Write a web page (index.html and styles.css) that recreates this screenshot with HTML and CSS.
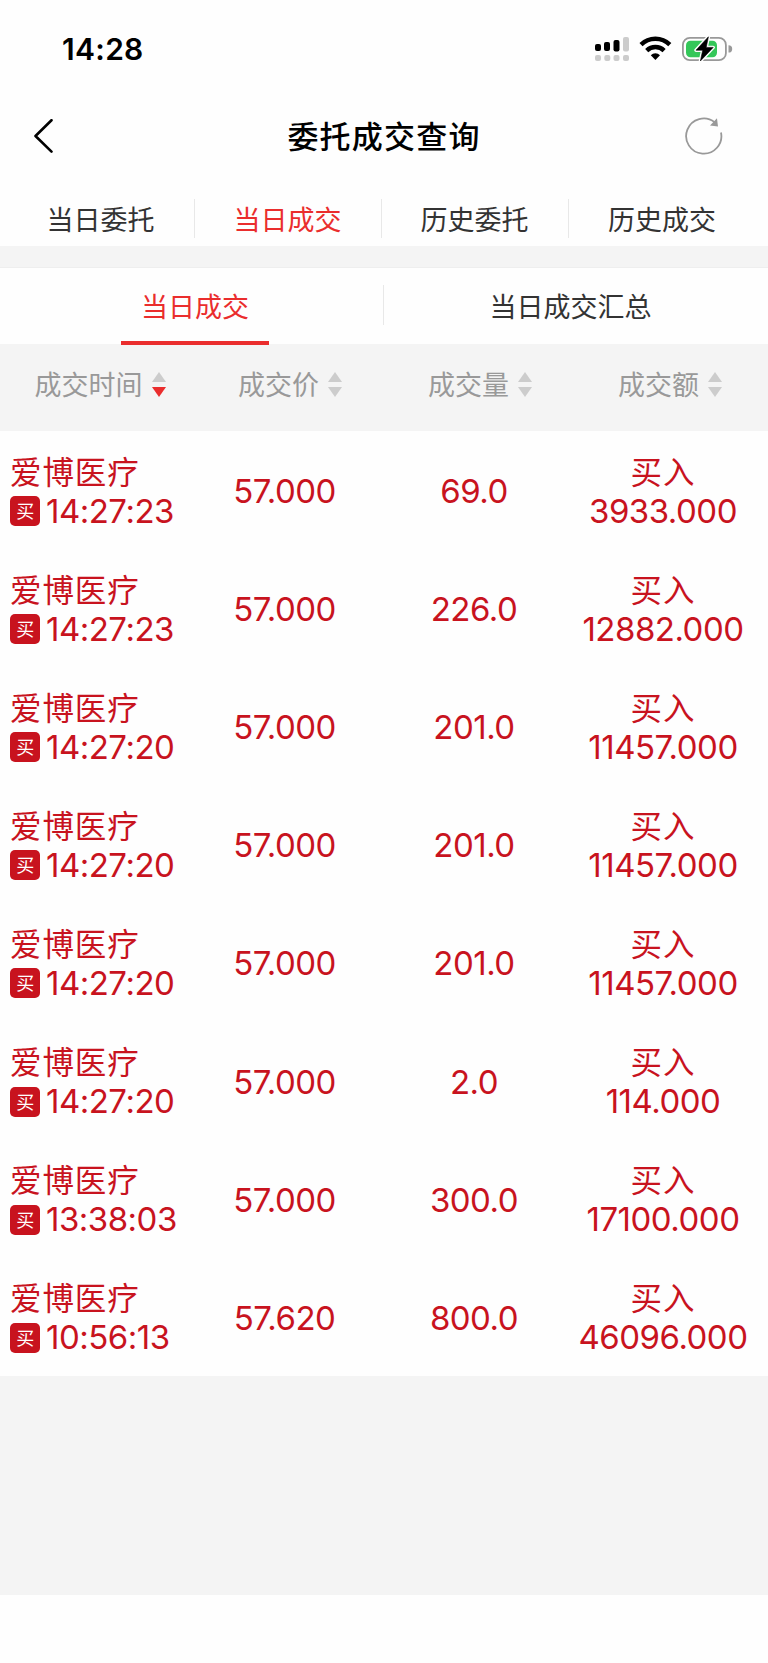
FILE: index.html
```
<!doctype html>
<html lang="zh-CN">
<head>
    <meta charset="utf-8" />
    <title>委托成交查询</title>
    <link rel="stylesheet" href="styles.css">
</head>
<body>
<div class="status">
    <span class="status__time">14:28</span>
    <svg class="status__icons" width="138" height="26" viewBox="0 0 138 26">
        <!-- 信号 -->
        <g fill="#000">
            <rect x="0" y="8" width="6" height="7" rx="2"/>
            <rect x="9" y="6" width="6" height="9" rx="2"/>
            <rect x="18.5" y="4" width="6" height="11.5" rx="2"/>
        </g>
        <g fill="#ccc">
            <rect x="28" y="1" width="6" height="14.5" rx="2"/>
            <rect x="0" y="19" width="6" height="6" rx="2"/>
            <rect x="9.3" y="19" width="6" height="6" rx="2"/>
            <rect x="18.5" y="19" width="6" height="6" rx="2"/>
            <rect x="28" y="19" width="6" height="6" rx="2"/>
        </g>
        <!-- wifi -->
        <g fill="none" stroke="#000" stroke-width="4.4">
            <path d="M46 8.6a20.5 20.5 0 0 1 28.8 0"/>
            <path d="M51.7 14.6a12.4 12.4 0 0 1 17.4 0"/>
        </g>
        <path d="M55.8 19.2a6.6 6.6 0 0 1 9.2 0L60.4 24Z"/>
        <!-- 电池 -->
        <rect x="87.9" y="1.9" width="43" height="22.3" rx="7" fill="none" stroke="#999" stroke-width="1.8"/>
        <path d="M133.5 9.2a3.6 3.6 0 0 1 0 7.4Z" fill="#999"/>
        <rect x="91" y="4.8" width="31" height="16.5" rx="4.5" fill="#34c759"/>
        <path d="M113.4 .8L101 14.2h6.7L105.4 25L118.2 11.4h-7Z" stroke="#fefefe" stroke-width="3.4" stroke-linejoin="round"/>
        <path d="M113.4 .8L101 14.2h6.7L105.4 25L118.2 11.4h-7Z" stroke="#000" stroke-width=".6" stroke-linejoin="round"/>
    </svg>
</div>
<div class="nav">
    <svg width="20" height="34" viewBox="0 0 20 34" fill="none" stroke="#000" stroke-width="2.6" stroke-linecap="round" stroke-linejoin="round">
        <path d="M17.5 1.2L1.5 17L17.5 32.6"/>
    </svg>
    <h1 class="nav__title">委托成交查询</h1>
    <svg width="38" height="38" viewBox="0 0 38 38">
        <path d="M36 15.5A17.6 17.6 0 1 1 29.6 5.2" fill="none" stroke="#999" stroke-width="1.8"/>
        <path d="M32 1.2L33 9.4L25 8.6Z" fill="#999"/>
    </svg>
</div>
<div class="tabs">
    <div class="tabs__item">当日委托</div>
    <div class="tabs__item is-active">当日成交</div>
    <div class="tabs__item">历史委托</div>
    <div class="tabs__item">历史成交</div>
</div>
<div class="subtabs">
    <div class="subtabs__item is-active"><span>当日成交</span></div>
    <div class="subtabs__item"><span>当日成交汇总</span></div>
</div>
<div class="head">
    <div class="head__cell"><span>成交时间</span><i class="sort sort--desc"></i></div>
    <div class="head__cell"><span>成交价</span><i class="sort"></i></div>
    <div class="head__cell"><span>成交量</span><i class="sort"></i></div>
    <div class="head__cell"><span>成交额</span><i class="sort"></i></div>
</div>
<div class="list">
    <div class="row">
        <div class="row__stock"><div class="cn">爱博医疗</div><div class="row__time"><b class="tag">买</b>14:27:23</div></div>
        <div>57.000</div>
        <div>69.0</div>
        <div><div class="cn">买入</div>3933.000</div>
    </div>
    <div class="row">
        <div class="row__stock"><div class="cn">爱博医疗</div><div class="row__time"><b class="tag">买</b>14:27:23</div></div>
        <div>57.000</div>
        <div>226.0</div>
        <div><div class="cn">买入</div>12882.000</div>
    </div>
    <div class="row">
        <div class="row__stock"><div class="cn">爱博医疗</div><div class="row__time"><b class="tag">买</b>14:27:20</div></div>
        <div>57.000</div>
        <div>201.0</div>
        <div><div class="cn">买入</div>11457.000</div>
    </div>
    <div class="row">
        <div class="row__stock"><div class="cn">爱博医疗</div><div class="row__time"><b class="tag">买</b>14:27:20</div></div>
        <div>57.000</div>
        <div>201.0</div>
        <div><div class="cn">买入</div>11457.000</div>
    </div>
    <div class="row">
        <div class="row__stock"><div class="cn">爱博医疗</div><div class="row__time"><b class="tag">买</b>14:27:20</div></div>
        <div>57.000</div>
        <div>201.0</div>
        <div><div class="cn">买入</div>11457.000</div>
    </div>
    <div class="row">
        <div class="row__stock"><div class="cn">爱博医疗</div><div class="row__time"><b class="tag">买</b>14:27:20</div></div>
        <div>57.000</div>
        <div>2.0</div>
        <div><div class="cn">买入</div>114.000</div>
    </div>
    <div class="row">
        <div class="row__stock"><div class="cn">爱博医疗</div><div class="row__time"><b class="tag">买</b>13:38:03</div></div>
        <div>57.000</div>
        <div>300.0</div>
        <div><div class="cn">买入</div>17100.000</div>
    </div>
    <div class="row">
        <div class="row__stock"><div class="cn">爱博医疗</div><div class="row__time"><b class="tag">买</b>10:56:13</div></div>
        <div>57.620</div>
        <div>800.0</div>
        <div><div class="cn">买入</div>46096.000</div>
    </div>
</div>
<div class="blank"></div>
</body>
</html>
```

FILE: styles.css
```
* {
    box-sizing: border-box;
}
body {
    margin: 0;
    height: 1663px;
    background-color: #fefefe;
    color: #333;
    font-family: Inter, "Noto Sans CJK SC", sans-serif;
    font-size: 27px;
}
.status {
    height: 98px;
    padding: 0 35px 0 62px;
    display: flex;
    justify-content: space-between;
}
.status__time {
    margin-top: 30px;
    line-height: 38px;
    font-size: 30px;
    font-weight: 600;
    letter-spacing: 0.3px;
    color: #000;
}
.status__icons {
    margin-top: 36px;
}
.nav {
    height: 76px;
    padding: 0 45px 0 34px;
    display: flex;
    align-items: center;
    justify-content: space-between;
}
.nav__title {
    margin: 0 0 4px 29px;
    font-size: 31px;
    font-weight: 500;
    letter-spacing: 1.2px;
    color: #000;
}
.tabs {
    height: 72px;
    padding: 25px 12px 8px 8px;
    display: flex;
}
.tabs__item {
    width: 187px;
    height: 39px;
    padding-right: 1px;
    line-height: 43px;
    text-align: center;
    border-right: 1px solid #e8e8e8;
}
.tabs__item:last-child {
    border-right: 0;
}
.is-active {
    color: #ea2d2d;
}
.subtabs {
    height: 98px;
    padding: 18px 9px 0 7px;
    border-top: 21px solid #f4f4f4;
    display: flex;
    box-shadow: inset 0 1px #eee;
}
.subtabs__item {
    width: 376px;
    height: 40px;
    line-height: 45px;
    text-align: center;
}
.subtabs__item:first-child {
    width: 377px;
    border-right: 1px solid #e8e8e8;
}
.subtabs__item:last-child {
    width: 375px;
    padding-right: 2px;
}
.subtabs__item.is-active span {
    display: inline-block;
    width: 148px;
    height: 60px;
    border-bottom: 4px solid #ea2d2d;
}
.head {
    height: 87px;
    padding: 0 3px 7px 5px;
    background-color: #f4f4f4;
    color: #999;
    display: grid;
    grid-template-columns: repeat(4, 190px);
    align-items: center;
}
.head__cell {
    display: flex;
    align-items: center;
    justify-content: center;
    line-height: 38px;
}
.head__cell span {
    padding-top: 3px;
}
.sort {
    margin-left: 9px;
}
.sort::before,
.sort::after {
    content: "";
    display: block;
    border: 7px solid transparent;
}
.sort::before {
    border-top: 0;
    border-bottom: 10px solid #ccc;
}
.sort::after {
    margin-top: 5px;
    border-bottom: 0;
    border-top: 10px solid #ccc;
}
.sort--desc::after {
    border-top-color: #ea2d2d;
}
.list {
    color: #c8131e;
    font-size: 33px;
    letter-spacing: -0.5px;
}
.row {
    height: 118.1px;
    display: grid;
    grid-template-columns: 190px 189px 190px 188px;
    align-items: center;
    text-align: center;
    line-height: 39px;
    padding-top: 3px;
}
.row__stock {
    padding-left: 10px;
    text-align: left;
    white-space: nowrap;
}
.cn {
    font-size: 31.5px;
    letter-spacing: 0.9px;
}
.row__time {
    display: flex;
    align-items: center;
}
.tag {
    width: 30px;
    height: 30px;
    margin-right: 6px;
    border-radius: 5px;
    background-color: #c8131e;
    color: #fff;
    font-size: 18px;
    font-weight: 400;
    line-height: 31px;
    text-align: center;
}
.blank {
    height: 219px;
    background-color: #f4f4f4;
}
```
